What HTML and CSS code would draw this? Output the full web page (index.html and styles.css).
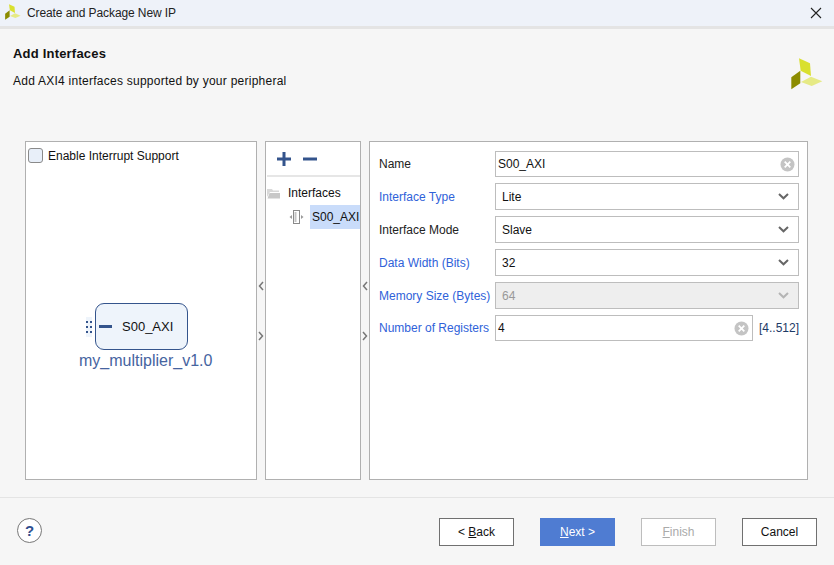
FILE: index.html
```html
<!DOCTYPE html>
<html lang="en">
<head>
  <meta charset="UTF-8" />
  <title>Create and Package New IP</title>
  <link rel="stylesheet" href="styles.css">
</head>
<body>

  <!-- Logo shapes, reused in title bar and header -->
  <svg class="defs" width="0" height="0">
    <symbol id="logo" viewBox="0 0 32 32">
      <polygon points="8,0.3 19,5.3 20,18 9.7,12.7" fill="#d9e02f"/>
      <polygon points="9.3,12.7 9.3,25.3 0.3,31.3 0.3,19.3" fill="#8c8c00"/>
      <polygon points="20,18.7 31.3,23.3 20.7,28 10,24" fill="#e6ea85"/>
    </symbol>
  </svg>

  <!-- Title bar -->
  <div class="titlebar">
    <svg class="titlebar-logo" width="16" height="16"><use href="#logo"/></svg>
    <span class="titlebar-text">Create and Package New IP</span>
    <svg class="close-icon" width="12" height="12" viewBox="0 0 12 12">
      <path d="M1 1L11 11M11 1L1 11" stroke="#222" stroke-width="1.1" fill="none"/>
    </svg>
  </div>

  <!-- Page header -->
  <div class="page-header">
    <div>
      <h1>Add Interfaces</h1>
      <p>Add AXI4 interfaces supported by your peripheral</p>
    </div>
    <svg class="header-logo" width="32" height="32"><use href="#logo"/></svg>
  </div>

  <!-- Main panels -->
  <div class="main">
    <div class="panel symbol-panel">
      <label class="check-row">
        <span class="checkbox"></span>
        Enable Interrupt Support
      </label>
      <div class="ip-block">
        <div class="ip-ports">
          <span></span><span></span><span></span><span></span><span></span><span></span>
        </div>
        <div class="ip-box">
          <span class="ip-minus"></span>
          S00_AXI
        </div>
      </div>
      <div class="ip-name">my_multiplier_v1.0</div>
    </div>

    <div class="splitter">
      <svg width="6" height="10" viewBox="0 0 6 10"><path d="M5 1L1.5 5L5 9" stroke="#777" stroke-width="1.5" fill="none"/></svg>
      <svg width="6" height="10" viewBox="0 0 6 10"><path d="M1 1L4.5 5L1 9" stroke="#777" stroke-width="1.5" fill="none"/></svg>
    </div>

    <div class="panel tree-panel">
      <div class="tree-toolbar">
        <svg width="14" height="14" viewBox="0 0 14 14"><path d="M7 0V14M0 7H14" stroke="#34548c" stroke-width="3" fill="none"/></svg>
        <svg width="14" height="14" viewBox="0 0 14 14"><path d="M0 7H14" stroke="#34548c" stroke-width="3" fill="none"/></svg>
      </div>
      <div class="tree-row">
        <svg width="13" height="11" viewBox="0 0 13 11">
          <path d="M0 1H5L6 2.5H12V4H3L0 9Z" fill="#d8d8d8"/>
          <path d="M2.5 5H13V10.5H0.5Z" fill="#c8c8c8"/>
        </svg>
        <span>Interfaces</span>
      </div>
      <div class="tree-row tree-child">
        <svg width="15" height="14" viewBox="0 0 15 14">
          <rect x="4.5" y="0.5" width="6" height="13" fill="#fff" stroke="#8a8a8a"/>
          <path d="M6.5 2V12" stroke="#c4c4c4" stroke-width="2"/>
          <path d="M3 5V9L0.5 7ZM12 5V9L14.5 7Z" fill="#9a9a9a"/>
        </svg>
        <span class="tree-selected">S00_AXI</span>
      </div>
    </div>

    <div class="splitter">
      <svg width="6" height="10" viewBox="0 0 6 10"><path d="M5 1L1.5 5L5 9" stroke="#777" stroke-width="1.5" fill="none"/></svg>
      <svg width="6" height="10" viewBox="0 0 6 10"><path d="M1 1L4.5 5L1 9" stroke="#777" stroke-width="1.5" fill="none"/></svg>
    </div>

    <div class="panel form-panel">
      <div class="form-row">
        <span class="form-label">Name</span>
        <div class="field text-field">
          <span class="field-value">S00_AXI</span>
          <svg class="clear-icon" width="15" height="15" viewBox="0 0 15 15"><circle cx="7.5" cy="7.5" r="7" fill="#c4c4c4"/><path d="M4.7 4.7L10.3 10.3M10.3 4.7L4.7 10.3" stroke="#fff" stroke-width="1.8"/></svg>
        </div>
      </div>
      <div class="form-row">
        <span class="form-label link">Interface Type</span>
        <div class="field select-field">
          <span class="field-value">Lite</span>
          <svg class="chevron" width="11" height="7" viewBox="0 0 11 7"><path d="M1 1L5.5 5.3L10 1" stroke="#666" stroke-width="2" fill="none"/></svg>
        </div>
      </div>
      <div class="form-row">
        <span class="form-label">Interface Mode</span>
        <div class="field select-field">
          <span class="field-value">Slave</span>
          <svg class="chevron" width="11" height="7" viewBox="0 0 11 7"><path d="M1 1L5.5 5.3L10 1" stroke="#666" stroke-width="2" fill="none"/></svg>
        </div>
      </div>
      <div class="form-row">
        <span class="form-label link">Data Width (Bits)</span>
        <div class="field select-field">
          <span class="field-value">32</span>
          <svg class="chevron" width="11" height="7" viewBox="0 0 11 7"><path d="M1 1L5.5 5.3L10 1" stroke="#666" stroke-width="2" fill="none"/></svg>
        </div>
      </div>
      <div class="form-row">
        <span class="form-label link">Memory Size (Bytes)</span>
        <div class="field select-field disabled">
          <span class="field-value">64</span>
          <svg class="chevron" width="11" height="7" viewBox="0 0 11 7"><path d="M1 1L5.5 5.3L10 1" stroke="#b4b4b4" stroke-width="2" fill="none"/></svg>
        </div>
      </div>
      <div class="form-row short">
        <span class="form-label link">Number of Registers</span>
        <div class="field text-field">
          <span class="field-value">4</span>
          <svg class="clear-icon" width="15" height="15" viewBox="0 0 15 15"><circle cx="7.5" cy="7.5" r="7" fill="#c4c4c4"/><path d="M4.7 4.7L10.3 10.3M10.3 4.7L4.7 10.3" stroke="#fff" stroke-width="1.8"/></svg>
        </div>
        <span class="range">[4..512]</span>
      </div>
    </div>
  </div>

  <!-- Footer -->
  <div class="footer">
    <div class="help-button">?</div>
    <div class="button-group">
      <button class="btn">&lt; <u>B</u>ack</button>
      <button class="btn primary"><u>N</u>ext &gt;</button>
      <button class="btn off"><u>F</u>inish</button>
      <button class="btn">Cancel</button>
    </div>
  </div>

</body>
</html>
```

FILE: styles.css
```css
html, body {
  margin: 0;
  padding: 0;
  width: 100%;
  height: 100%;
  overflow: hidden;
  font-family: 'Liberation Sans', Arial, sans-serif;
  font-size: 12px;
  background-color: #f6f6f6;
  color: #111;
}

body {
  display: flex;
  flex-direction: column;
}

.defs {
  position: absolute;
}

.titlebar {
  display: flex;
  align-items: center;
  height: 26px;
  padding: 0 12px 0 5px;
  background-color: #eef2f9;
  border-bottom: 3px solid #e4e4e4;
}

.titlebar-logo {
  margin-right: 6px;
  margin-top: -3px;
}

.titlebar-text {
  flex: 1;
  color: #222;
  letter-spacing: -0.1px;
}

.page-header {
  display: flex;
  justify-content: space-between;
  height: 112px;
  padding: 0 11px 0 13px;
}

.page-header h1 {
  margin: 17px 0 0;
  font-size: 13px;
  line-height: 16px;
  letter-spacing: 0.2px;
}

.page-header p {
  margin: 12px 0 0;
  line-height: 14px;
  letter-spacing: 0.25px;
}

.header-logo {
  margin-top: 29px;
}

.main {
  display: flex;
  height: 339px;
  padding: 0 26px 0 25px;
}

.panel {
  box-sizing: border-box;
  background-color: #fff;
  border: 1px solid #b0b0b0;
}

.splitter {
  display: flex;
  flex-direction: column;
  align-items: center;
  gap: 40px;
  width: 8px;
  padding-top: 140px;
}

/* Symbol panel */
.symbol-panel {
  width: 232px;
  padding: 5px 2px;
}

.check-row {
  display: flex;
  align-items: center;
  gap: 5px;
  height: 17px;
}

.checkbox {
  box-sizing: border-box;
  width: 15px;
  height: 15px;
  background-color: #e8eff9;
  border: 1px solid #8a8a8a;
  border-radius: 3px;
}

.ip-block {
  display: flex;
  align-items: center;
  margin: 139px 0 0 58px;
}

.ip-ports {
  display: grid;
  grid-template-columns: 2px 2px;
  gap: 3px 2px;
  padding: 4px 0;
  background-color: #eef4fb;
}

.ip-ports span {
  width: 2px;
  height: 2px;
  background-color: #34548c;
}

.ip-box {
  box-sizing: border-box;
  display: flex;
  align-items: center;
  width: 93px;
  height: 47px;
  margin-left: 3px;
  padding-left: 3px;
  font-size: 13px;
  background-color: #eef4fb;
  border: 1px solid #34548c;
  border-radius: 9px;
}

.ip-minus {
  width: 13px;
  height: 3px;
  margin-right: 10px;
  background-color: #34548c;
}

.ip-name {
  margin: 1px 0 0 51px;
  font-size: 16px;
  line-height: 19px;
  color: #46649f;
}

/* Tree panel */
.tree-panel {
  width: 96px;
  overflow: hidden;
}

.tree-toolbar {
  display: flex;
  align-items: center;
  gap: 12px;
  height: 33px;
  margin: 0 0 0 1px;
  padding-left: 10px;
  border-bottom: 2px solid #e6e6e6;
}

.tree-row {
  display: flex;
  align-items: center;
  gap: 8px;
  height: 24px;
  padding-left: 1px;
  white-space: nowrap;
}

.tree-row:nth-child(2) {
  margin-top: 4px;
}

.tree-child {
  gap: 6px;
  padding-left: 23px;
}

.tree-selected {
  flex: 1;
  line-height: 24px;
  padding-left: 2px;
  background-color: #c9dcfa;
}

/* Form panel */
.form-panel {
  display: flex;
  flex-direction: column;
  gap: 6px;
  width: 439px;
  padding: 9px 8px 0 9px;
}

.form-row {
  display: flex;
  align-items: center;
  height: 27px;
}

.form-row:first-child,
.form-row.short {
  height: 26px;
}

.form-label {
  flex: none;
  width: 116px;
  color: #222;
}

.form-label.link {
  color: #2f62d9;
}

.field {
  box-sizing: border-box;
  flex: 1;
  display: flex;
  align-items: center;
  justify-content: space-between;
  height: 100%;
  padding-right: 3px;
  background-color: #fff;
  border: 1px solid #bdbdbd;
}

.field-value {
  padding-left: 2px;
}

.select-field {
  padding-right: 9px;
}

.select-field .field-value {
  padding-left: 6px;
}

.field.disabled {
  background-color: #eeeeee;
  color: #999;
}

.range {
  flex: none;
  width: 40px;
  margin-left: 6px;
  color: #1d3a66;
}

/* Footer */
.footer {
  display: flex;
  justify-content: space-between;
  align-items: flex-start;
  margin-top: 17px;
  padding: 20px 17px 0;
  border-top: 1px solid #e4e4e4;
}

.help-button {
  box-sizing: border-box;
  width: 25px;
  height: 25px;
  text-align: center;
  font-size: 15px;
  font-weight: bold;
  line-height: 23px;
  color: #2f4f8f;
  background-color: #fff;
  border: 1px solid #777;
  border-radius: 50%;
}

.button-group {
  display: flex;
  gap: 26px;
}

.btn {
  box-sizing: border-box;
  width: 75px;
  height: 28px;
  padding: 0;
  font-family: inherit;
  font-size: 12px;
  color: #111;
  background-color: #fff;
  border: 1px solid #707070;
}

.btn.primary {
  color: #fff;
  background-color: #4f7cd2;
  border-color: #4f7cd2;
}

.btn.off {
  color: #aaa;
  border-color: #bdbdbd;
}
```
